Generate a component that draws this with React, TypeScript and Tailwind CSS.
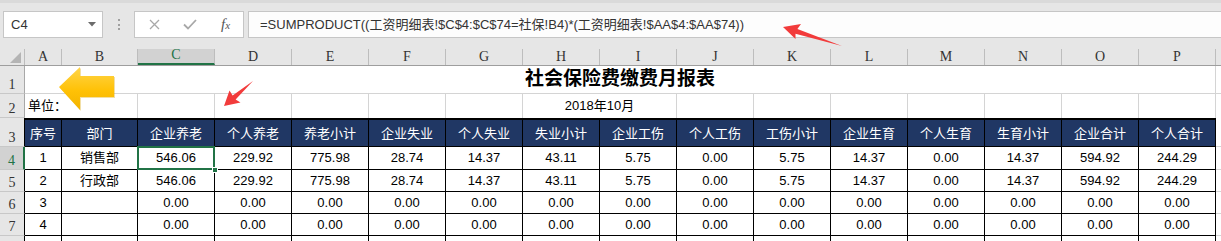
import React from 'react'

const letters = ['A', 'B', 'C', 'D', 'E', 'F', 'G', 'H', 'I', 'J', 'K', 'L', 'M', 'N', 'O', 'P']
const widths = [
  'w-[37px]',
  'w-[76px]',
  'w-[77px]',
  'w-[77px]',
  'w-[77px]',
  'w-[77px]',
  'w-[77px]',
  'w-[77px]',
  'w-[77px]',
  'w-[77px]',
  'w-[77px]',
  'w-[77px]',
  'w-[77px]',
  'w-[77px]',
  'w-[77px]',
  'w-[77px]',
]

const heads = [
  '序号',
  '部门',
  '企业养老',
  '个人养老',
  '养老小计',
  '企业失业',
  '个人失业',
  '失业小计',
  '企业工伤',
  '个人工伤',
  '工伤小计',
  '企业生育',
  '个人生育',
  '生育小计',
  '企业合计',
  '个人合计',
]

const filled = ['546.06', '229.92', '775.98', '28.74', '14.37', '43.11', '5.75', '0.00', '5.75', '14.37', '0.00', '14.37', '594.92', '244.29']
const zeros = Array(14).fill('0.00')

const rows = [
  { n: 4, h: 'h-[23px]', cells: ['1', '销售部', ...filled] },
  { n: 5, h: 'h-[22px]', cells: ['2', '行政部', ...filled] },
  { n: 6, h: 'h-[22px]', cells: ['3', '', ...zeros] },
  { n: 7, h: 'h-[22px]', cells: ['4', '', ...zeros] },
]

const sans = "font-['Liberation_Sans','Noto_Sans_CJK_SC',sans-serif]"
const serif = "font-['Liberation_Serif','DejaVu_Serif',serif]"

function RowHead({ n, active, dark }: { n?: number; active?: boolean; dark?: boolean }) {
  const edge = active
    ? 'bg-[#d2d2d2] text-[#217346] border-r-2 border-r-[#217346]'
    : dark
      ? 'bg-[#e6e6e6] text-[#333] border-r border-r-black'
      : 'bg-[#e6e6e6] text-[#333] border-r border-r-[#a8a8a8]'
  return (
    <div
      className={`flex w-[25px] shrink-0 items-end justify-center border-b border-b-[#c8c8c8] pb-[1px] text-[14px] leading-none ${serif} ${edge}`}
    >
      {n}
    </div>
  )
}

function FormulaBar() {
  return (
    <div className="flex h-[49px] items-start border-t-[3px] border-t-[#dadada] pt-[8px]">
      <div className="ml-[3px] flex h-[27px] w-[100px] items-center justify-between border border-[#c6c6c6] bg-white pl-[7px] pr-[6px]">
        <span className="text-[13px] text-[#333]">C4</span>
        <svg width="8" height="5" viewBox="0 0 8 5">
          <path d="M0 0h8L4 4.5z" fill="#6b6b6b" />
        </svg>
      </div>
      <div className="ml-[15px] flex flex-col gap-[2.5px] pt-[8px]">
        <span className="h-[2px] w-[2px] bg-[#a0a0a0]" />
        <span className="h-[2px] w-[2px] bg-[#a0a0a0]" />
        <span className="h-[2px] w-[2px] bg-[#a0a0a0]" />
      </div>
      <div className="ml-[14px] flex h-[27px] w-[110px] items-center border border-[#c6c6c6] bg-white">
        <svg className="ml-[14px]" width="11" height="11" viewBox="0 0 11 11">
          <path d="M1 1l9 9M10 1l-9 9" stroke="#a8a8a8" strokeWidth="1.3" fill="none" />
        </svg>
        <svg className="ml-[23px]" width="14" height="11" viewBox="0 0 14 11">
          <path d="M1 5.5l4 4L13 1" stroke="#a8a8a8" strokeWidth="1.8" fill="none" />
        </svg>
        <span className={`ml-[24px] text-[15px] italic text-[#555] ${serif}`}>
          f<span className="text-[11px]">x</span>
        </span>
      </div>
      <div
        className={`ml-[4px] flex h-[27px] flex-1 items-center border border-r-0 border-[#c6c6c6] bg-[#fdfdfd] pl-[11px] text-[13px] text-[#333] ${sans}`}
      >
        =SUMPRODUCT((工资明细表!$C$4:$C$74=社保!B4)*(工资明细表!$AA$4:$AA$74))
      </div>
    </div>
  )
}

function ColumnHeads() {
  return (
    <div className="flex h-[17px] border-b border-b-[#9e9e9e] bg-[#e6e6e6]">
      <div className="relative w-[25px] shrink-0 border-r border-r-[#bdbdbd]">
        <svg className="absolute bottom-[2px] right-[3px]" width="11" height="11" viewBox="0 0 11 11">
          <path d="M11 0v11H0z" fill="#b4b4b4" />
        </svg>
      </div>
      {letters.map((l, i) => (
        <div
          key={l}
          className={`${widths[i]} flex shrink-0 items-end justify-center pb-[1px] text-[14px] leading-none ${serif} ${
            i === 2
              ? 'border-b-2 border-b-[#217346] border-r border-r-[#bdbdbd] bg-[#d2d2d2] text-[#217346]'
              : 'border-r border-r-[#bdbdbd] text-[#333]'
          }`}
        >
          {l}
        </div>
      ))}
      <div className="flex-1" />
    </div>
  )
}

function Arrows() {
  return (
    <svg className="pointer-events-none absolute left-0 top-0" width="1221" height="241" viewBox="0 0 1221 241">
      <defs>
        <linearGradient id="gold" x1="0" y1="0" x2="0" y2="1">
          <stop offset="0" stopColor="#ffd54a" />
          <stop offset="0.55" stopColor="#ffc106" />
          <stop offset="1" stopColor="#f2b300" />
        </linearGradient>
      </defs>
      <polygon points="60,88 81,68 81,77 115,77 115,98 81,98 81,111" fill="#d9a400" opacity="0.35" />
      <polygon points="59,87 80,67 80,76 114,76 114,97 80,97 80,110" fill="url(#gold)" />
      <polygon points="783,27 801,24 797.4,29 842,46 795.5,33.7 795.5,39" fill="#f23b3b" />
      <polygon points="224,106 229.5,90.5 232.6,95.4 253,81 235.6,99.6 240.5,102.5" fill="#f23b3b" />
    </svg>
  )
}

export default function App() {
  return (
    <div className={`relative h-[241px] w-[1221px] overflow-hidden bg-[#e6e6e6] ${sans}`}>
      <FormulaBar />
      <ColumnHeads />

      {/* row 1: merged title */}
      <div className="flex h-[28px]">
        <RowHead n={1} />
        <div className="flex w-[1191px] shrink-0 items-center justify-center border-b border-r border-[#d4d4d4] bg-white text-[19px] font-bold text-black">
          社会保险费缴费月报表
        </div>
        <div className="flex-1 border-b border-[#d4d4d4] bg-white" />
      </div>

      {/* row 2 */}
      <div className="flex h-[24px]">
        <RowHead n={2} />
        <div className="flex w-[113px] shrink-0 items-center border-r border-[#d4d4d4] bg-white pl-[3px] text-[13px] text-black">
          单位：
        </div>
        {[2, 3, 4, 5, 6].map((i) => (
          <div key={i} className={`${widths[i]} shrink-0 border-r border-[#d4d4d4] bg-white`} />
        ))}
        <div className="flex w-[154px] shrink-0 items-center justify-center border-r border-[#d4d4d4] bg-white text-[13px] text-black">
          2018年10月
        </div>
        {[9, 10, 11, 12, 13, 14, 15].map((i) => (
          <div key={i} className={`${widths[i]} shrink-0 border-r border-[#d4d4d4] bg-white`} />
        ))}
        <div className="flex-1 bg-white" />
      </div>

      {/* row 3: table header */}
      <div className="flex h-[29px]">
        <RowHead n={3} dark />
        {heads.map((t, i) => (
          <div
            key={t}
            className={`${widths[i]} flex shrink-0 items-center justify-center border-b border-r border-t-2 border-black bg-[#203764] pt-[1px] text-[13px] text-white`}
          >
            {t}
          </div>
        ))}
        <div className="flex-1 border-b border-[#d4d4d4] bg-white" />
      </div>

      {rows.map((r) => (
        <div key={r.n} className={`flex ${r.h}`}>
          <RowHead n={r.n} active={r.n === 4} dark />
          {r.cells.map((c, i) => (
            <div
              key={i}
              className={`${widths[i]} relative flex shrink-0 items-center justify-center border-b border-r border-black bg-white text-[13px] text-black`}
            >
              {c}
              {r.n === 4 && i === 2 ? (
                <>
                  <div className="absolute -left-px -top-px bottom-[-1px] right-[-1px] z-10 border-2 border-[#217346]" />
                  <div className="absolute bottom-[-4px] right-[-4px] z-20 h-[6px] w-[6px] border border-white bg-[#217346]" />
                </>
              ) : null}
            </div>
          ))}
          <div className="flex-1 border-b border-[#d4d4d4] bg-white" />
        </div>
      ))}

      {/* row 8, cut off at the window edge */}
      <div className="flex h-[22px]">
        <RowHead dark />
        {widths.map((w, i) => (
          <div key={i} className={`${w} shrink-0 border-r border-black bg-white`} />
        ))}
        <div className="flex-1 bg-white" />
      </div>

      <Arrows />
    </div>
  )
}
